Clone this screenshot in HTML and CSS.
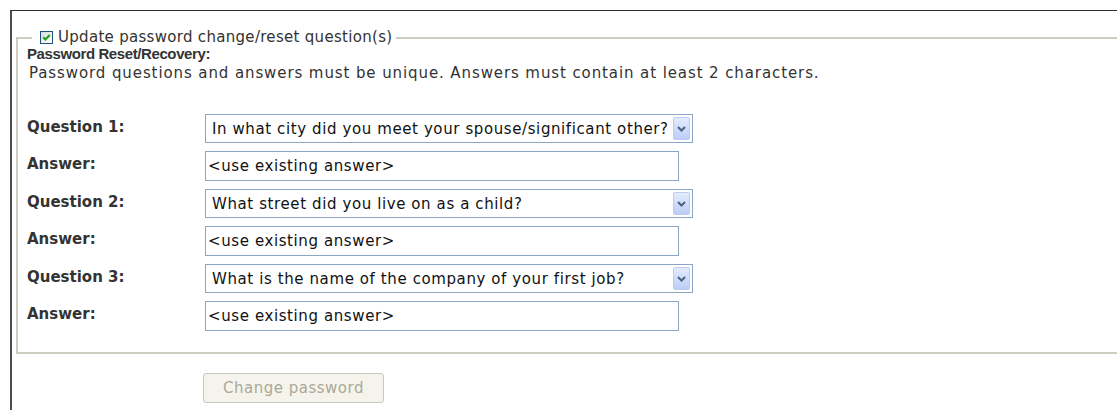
FILE: index.html
```html
<!DOCTYPE html>
<html lang="en">
<head>
<meta charset="utf-8">
<title>Change password</title>
<link rel="stylesheet" href="styles.css">
</head>
<body>
<div class="panel">
  <fieldset class="questions">
    <legend class="questions-legend">
      <label class="check-label">
        <span class="checkbox" aria-checked="true" role="checkbox">
          <svg width="11" height="11" viewBox="0 0 11 11"><path d="M2.2 5.3 L4.4 7.5 L8.8 3" fill="none" stroke="#21a121" stroke-width="2.2"/></svg>
        </span>
        <span class="check-text">Update password change/reset question(s)</span>
      </label>
    </legend>
    <div class="section-title">Password Reset/Recovery:</div>
    <div class="section-note">Password questions and answers must be unique. Answers must contain at least 2 characters.</div>
    <div class="qa-grid">
      <div class="qa-label">Question 1:</div>
      <div class="select">
        <span class="select-text">In what city did you meet your spouse/significant other?</span>
        <span class="select-drop"><svg width="9" height="6" viewBox="0 0 9 6"><path d="M1 1 L4.5 4.5 L8 1" fill="none" stroke="#4d6185" stroke-width="2"/></svg></span>
      </div>
      <div class="qa-label">Answer:</div>
      <input class="answer" type="text" value="&lt;use existing answer&gt;">

      <div class="qa-label">Question 2:</div>
      <div class="select">
        <span class="select-text">What street did you live on as a child?</span>
        <span class="select-drop"><svg width="9" height="6" viewBox="0 0 9 6"><path d="M1 1 L4.5 4.5 L8 1" fill="none" stroke="#4d6185" stroke-width="2"/></svg></span>
      </div>
      <div class="qa-label">Answer:</div>
      <input class="answer" type="text" value="&lt;use existing answer&gt;">

      <div class="qa-label">Question 3:</div>
      <div class="select">
        <span class="select-text">What is the name of the company of your first job?</span>
        <span class="select-drop"><svg width="9" height="6" viewBox="0 0 9 6"><path d="M1 1 L4.5 4.5 L8 1" fill="none" stroke="#4d6185" stroke-width="2"/></svg></span>
      </div>
      <div class="qa-label">Answer:</div>
      <input class="answer" type="text" value="&lt;use existing answer&gt;">
    </div>
  </fieldset>
  <div class="actions">
    <button class="submit" type="button" disabled>Change password</button>
  </div>
</div>
</body>
</html>
```
FILE: styles.css
```css
html, body {
  margin: 0;
  padding: 0;
  background: #ffffff;
}

body {
  font-family: "DejaVu Sans", "Liberation Sans", sans-serif;
  font-size: 15px;
  color: #333333;
}

/* outer frame: dark rule along the top and left */
.panel {
  margin: 10px 0 0 10px;
  border-top: 1px solid #2e2e2e;
  border-left: 2px solid #4e4e4e;
  padding: 19px 0 0 4px;
  height: 400px;
  box-sizing: border-box;
}

.questions {
  margin: 0;
  padding: 0 0 21px 9px;
  border: 2px solid #cdcdc1;
  border-right: none;
  min-width: 0;
}

.questions-legend {
  margin-left: 5px;
  padding: 0 4px 2px 8px;
}

.check-label {
  display: flex;
  align-items: center;
  gap: 5px;
  line-height: 14px;
  color: #333333;
}

.check-text {
  letter-spacing: 0.3px;
}

.checkbox {
  width: 11px;
  height: 11px;
  border: 1px solid #1c5180;
  background: linear-gradient(135deg, #dcdcd7, #ffffff);
  display: flex;
  align-items: center;
  justify-content: center;
}

.section-title {
  font-family: "Liberation Sans", "DejaVu Sans", sans-serif;
  font-weight: bold;
  font-size: 15px;
  letter-spacing: -0.4px;
  line-height: 15px;
  color: #333333;
}

.section-note {
  margin-top: 1px;
  line-height: 22px;
  padding-left: 2px;
  letter-spacing: 0.9px;
}

.qa-grid {
  display: grid;
  grid-template-columns: 178px auto;
  justify-content: start;
  row-gap: 8px;
  margin-top: 30px;
}

.qa-label {
  font-weight: bold;
  line-height: 18px;
  align-self: center;
  margin-bottom: 4px;
  color: #333333;
}

.select {
  width: 488px;
  height: 29px;
  box-sizing: border-box;
  border: 1px solid #8ca4c4;
  display: flex;
  align-items: center;
  padding: 0 2px 0 6px;
  background: #ffffff;
}

.select-text {
  flex: 1;
  white-space: nowrap;
  color: #111111;
  letter-spacing: 0.6px;
}

.select-drop {
  width: 17px;
  height: 23px;
  box-sizing: border-box;
  border: 1px solid #bccbee;
  border-radius: 2px;
  background: linear-gradient(#e3ebfe, #bccdf8);
  display: flex;
  align-items: center;
  justify-content: center;
}

.answer {
  width: 474px;
  height: 30px;
  box-sizing: border-box;
  border: 1px solid #8ca4c4;
  padding: 0 2px;
  font-family: inherit;
  font-size: 15px;
  letter-spacing: 0.6px;
  color: #111111;
  outline: none;
}

.actions {
  padding: 19px 0 0 187px;
}

.submit {
  width: 181px;
  height: 30px;
  border: 1px solid #cac8bb;
  border-radius: 3px;
  background: #f5f4ec;
  color: #aca899;
  font-family: inherit;
  font-size: 15px;
  letter-spacing: 0.5px;
  padding: 0;
}
```
